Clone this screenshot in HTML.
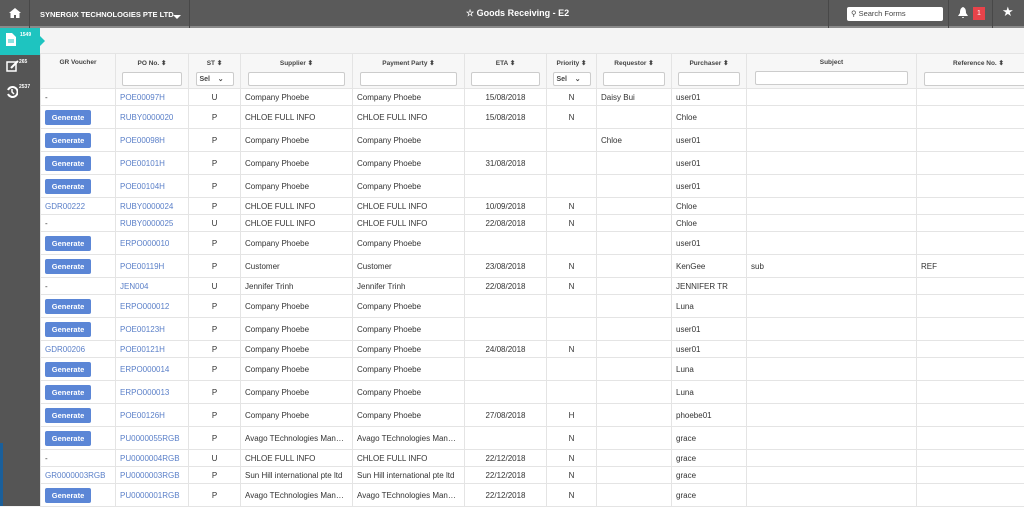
<!DOCTYPE html>
<html><head><meta charset="utf-8"><style>
*{box-sizing:border-box;margin:0;padding:0}
body{width:1024px;height:506px;overflow:hidden;background:#f4f4f4;font-family:"Liberation Sans",Arial,sans-serif;font-size:8px;color:#333;position:relative}
.top{position:absolute;left:0;top:0;width:1024px;height:28px;background:#5a5a5a;border-bottom:2px solid #8a8a8a}
.top .sep{position:absolute;top:0;height:28px;border-left:1px solid #484848}
.side{position:absolute;left:0;top:28px;width:40px;height:478px;background:#555}
.act{position:absolute;left:0;top:28px;width:40px;height:27px;background:#1ec4c0}
.act:after{content:"";position:absolute;left:40px;top:8px;border-left:5px solid #1ec4c0;border-top:5px solid transparent;border-bottom:5px solid transparent}
.cnt{position:absolute;color:#fff;font-size:5px;font-weight:bold}
table{position:absolute;left:40px;top:53px;border-collapse:collapse;table-layout:fixed;width:1000px}
td,th{border:1px solid #e4e4e4;white-space:nowrap;overflow:hidden;text-overflow:ellipsis;padding:0 4px}
th{background:#f7f7f7;font-size:6.5px;font-weight:bold;color:#444;height:35px;vertical-align:top;padding-top:5px;text-align:center}
th input,th .sel{display:block;margin:5px auto 0;width:95%;height:14px;border:1px solid #ccc;background:#fff;border-radius:2px}
th .sel{font-size:7px;text-align:left;padding:2px 3px;width:38px}
td{background:#fff;height:17px}
tr.g td{height:23px}
.b{display:inline-block;background:#5b86d6;color:#fff;border-radius:2px;width:46px;height:15px;line-height:15px;text-align:center;font-size:7.5px;font-weight:bold}
.l{color:#5a7fc8}
.c{text-align:center}
</style></head><body>
<div class="top">
<div class="sep" style="left:29px"></div><div class="sep" style="left:189px"></div><div class="sep" style="left:828px"></div><div class="sep" style="left:948px"></div><div class="sep" style="left:992px"></div>
<svg style="position:absolute;left:9px;top:8px" width="12" height="10" viewBox="0 0 12 10"><path d="M6 0L0 5h1.5v5h3.5V7h2v3h3.5V5H12z" fill="#fff"/></svg>
<div style="position:absolute;left:40px;top:10px;color:#fff;font-size:7.5px;font-weight:bold">SYNERGIX TECHNOLOGIES PTE LTD</div>
<div style="position:absolute;left:173px;top:15px;border-top:4px solid #fff;border-left:4px solid transparent;border-right:4px solid transparent"></div>
<div style="position:absolute;left:466px;top:8px;color:#fff;font-size:9px;font-weight:bold">☆ Goods Receiving - E2</div>
<div style="position:absolute;left:847px;top:7px;width:96px;height:14px;background:#fff;border-radius:2px;font-size:7.5px;color:#444;padding:2px 4px">&#9906; Search Forms</div>
<svg style="position:absolute;left:958px;top:7px" width="10" height="12" viewBox="0 0 10 12"><path d="M5 0C2.5 1 2 3 2 6L0 9h10L8 6C8 3 7.5 1 5 0zM4 10h2a1 1 0 01-2 0z" fill="#fff"/></svg>
<div style="position:absolute;left:973px;top:7px;width:12px;height:13px;background:#e8434a;color:#fff;font-size:7px;text-align:center;line-height:13px">1</div>
<div style="position:absolute;left:1002px;top:4px;color:#fff;font-size:13px">★</div>
</div>
<div class="side"></div>
<div class="act"></div>
<svg style="position:absolute;left:6px;top:33px" width="10" height="13" viewBox="0 0 10 13"><path d="M0 0h6l4 4v9H0z" fill="#fff"/><path d="M2 7h6M2 9h6" stroke="#1ec4c0"/></svg>
<div class="cnt" style="left:20px;top:32px">1549</div>
<svg style="position:absolute;left:6px;top:60px" width="13" height="13" viewBox="0 0 13 13"><rect x="1" y="2" width="9" height="9" fill="none" stroke="#fff" stroke-width="1.5"/><path d="M5 8l7-7" stroke="#fff" stroke-width="2"/></svg>
<div class="cnt" style="left:19px;top:59px">265</div>
<svg style="position:absolute;left:6px;top:86px" width="12" height="12" viewBox="0 0 12 12"><path d="M2 4A5 5 0 1 1 2 8" fill="none" stroke="#fff" stroke-width="2"/><path d="M6 3v3l2 2" fill="none" stroke="#fff" stroke-width="1.5"/></svg>
<div class="cnt" style="left:19px;top:84px">2537</div>
<div style="position:absolute;left:0;top:443px;width:3px;height:63px;background:#1a5f9a"></div>
<table>
<colgroup><col style="width:75px"><col style="width:73px"><col style="width:52px"><col style="width:112px"><col style="width:112px"><col style="width:82px"><col style="width:50px"><col style="width:75px"><col style="width:75px"><col style="width:170px"><col style="width:124px"></colgroup>
<tr><th>GR Voucher</th><th>PO No. ⬍<input></th><th>ST ⬍<div class="sel">Sel &nbsp;&nbsp;&nbsp;⌄</div></th><th>Supplier ⬍<input></th><th>Payment Party ⬍<input></th><th>ETA ⬍<input></th><th>Priority ⬍<div class="sel">Sel &nbsp;&nbsp;&nbsp;⌄</div></th><th>Requestor ⬍<input></th><th>Purchaser ⬍<input></th><th>Subject<input></th><th>Reference No. ⬍<input></th></tr>
<tr><td>-</td><td class="l">POE00097H</td><td class="c">U</td><td>Company Phoebe</td><td>Company Phoebe</td><td class="c">15/08/2018</td><td class="c">N</td><td>Daisy Bui</td><td>user01</td><td></td><td></td></tr>
<tr class="g"><td><span class="b">Generate</span></td><td class="l">RUBY0000020</td><td class="c">P</td><td>CHLOE FULL INFO</td><td>CHLOE FULL INFO</td><td class="c">15/08/2018</td><td class="c">N</td><td></td><td>Chloe</td><td></td><td></td></tr>
<tr class="g"><td><span class="b">Generate</span></td><td class="l">POE00098H</td><td class="c">P</td><td>Company Phoebe</td><td>Company Phoebe</td><td></td><td></td><td>Chloe</td><td>user01</td><td></td><td></td></tr>
<tr class="g"><td><span class="b">Generate</span></td><td class="l">POE00101H</td><td class="c">P</td><td>Company Phoebe</td><td>Company Phoebe</td><td class="c">31/08/2018</td><td></td><td></td><td>user01</td><td></td><td></td></tr>
<tr class="g"><td><span class="b">Generate</span></td><td class="l">POE00104H</td><td class="c">P</td><td>Company Phoebe</td><td>Company Phoebe</td><td></td><td></td><td></td><td>user01</td><td></td><td></td></tr>
<tr><td class="l">GDR00222</td><td class="l">RUBY0000024</td><td class="c">P</td><td>CHLOE FULL INFO</td><td>CHLOE FULL INFO</td><td class="c">10/09/2018</td><td class="c">N</td><td></td><td>Chloe</td><td></td><td></td></tr>
<tr><td>-</td><td class="l">RUBY0000025</td><td class="c">U</td><td>CHLOE FULL INFO</td><td>CHLOE FULL INFO</td><td class="c">22/08/2018</td><td class="c">N</td><td></td><td>Chloe</td><td></td><td></td></tr>
<tr class="g"><td><span class="b">Generate</span></td><td class="l">ERPO000010</td><td class="c">P</td><td>Company Phoebe</td><td>Company Phoebe</td><td></td><td></td><td></td><td>user01</td><td></td><td></td></tr>
<tr class="g"><td><span class="b">Generate</span></td><td class="l">POE00119H</td><td class="c">P</td><td>Customer</td><td>Customer</td><td class="c">23/08/2018</td><td class="c">N</td><td></td><td>KenGee</td><td>sub</td><td>REF</td></tr>
<tr><td>-</td><td class="l">JEN004</td><td class="c">U</td><td>Jennifer Trinh</td><td>Jennifer Trinh</td><td class="c">22/08/2018</td><td class="c">N</td><td></td><td>JENNIFER TR</td><td></td><td></td></tr>
<tr class="g"><td><span class="b">Generate</span></td><td class="l">ERPO000012</td><td class="c">P</td><td>Company Phoebe</td><td>Company Phoebe</td><td></td><td></td><td></td><td>Luna</td><td></td><td></td></tr>
<tr class="g"><td><span class="b">Generate</span></td><td class="l">POE00123H</td><td class="c">P</td><td>Company Phoebe</td><td>Company Phoebe</td><td></td><td></td><td></td><td>user01</td><td></td><td></td></tr>
<tr><td class="l">GDR00206</td><td class="l">POE00121H</td><td class="c">P</td><td>Company Phoebe</td><td>Company Phoebe</td><td class="c">24/08/2018</td><td class="c">N</td><td></td><td>user01</td><td></td><td></td></tr>
<tr class="g"><td><span class="b">Generate</span></td><td class="l">ERPO000014</td><td class="c">P</td><td>Company Phoebe</td><td>Company Phoebe</td><td></td><td></td><td></td><td>Luna</td><td></td><td></td></tr>
<tr class="g"><td><span class="b">Generate</span></td><td class="l">ERPO000013</td><td class="c">P</td><td>Company Phoebe</td><td>Company Phoebe</td><td></td><td></td><td></td><td>Luna</td><td></td><td></td></tr>
<tr class="g"><td><span class="b">Generate</span></td><td class="l">POE00126H</td><td class="c">P</td><td>Company Phoebe</td><td>Company Phoebe</td><td class="c">27/08/2018</td><td class="c">H</td><td></td><td>phoebe01</td><td></td><td></td></tr>
<tr class="g"><td><span class="b">Generate</span></td><td class="l">PU0000055RGB</td><td class="c">P</td><td>Avago TEchnologies Manufact...</td><td>Avago TEchnologies Manufact...</td><td></td><td class="c">N</td><td></td><td>grace</td><td></td><td></td></tr>
<tr><td>-</td><td class="l">PU0000004RGB</td><td class="c">U</td><td>CHLOE FULL INFO</td><td>CHLOE FULL INFO</td><td class="c">22/12/2018</td><td class="c">N</td><td></td><td>grace</td><td></td><td></td></tr>
<tr><td class="l">GR0000003RGB</td><td class="l">PU0000003RGB</td><td class="c">P</td><td>Sun Hill international pte ltd</td><td>Sun Hill international pte ltd</td><td class="c">22/12/2018</td><td class="c">N</td><td></td><td>grace</td><td></td><td></td></tr>
<tr class="g"><td><span class="b">Generate</span></td><td class="l">PU0000001RGB</td><td class="c">P</td><td>Avago TEchnologies Manufact...</td><td>Avago TEchnologies Manufact...</td><td class="c">22/12/2018</td><td class="c">N</td><td></td><td>grace</td><td></td><td></td></tr>
</table>
</body></html>
